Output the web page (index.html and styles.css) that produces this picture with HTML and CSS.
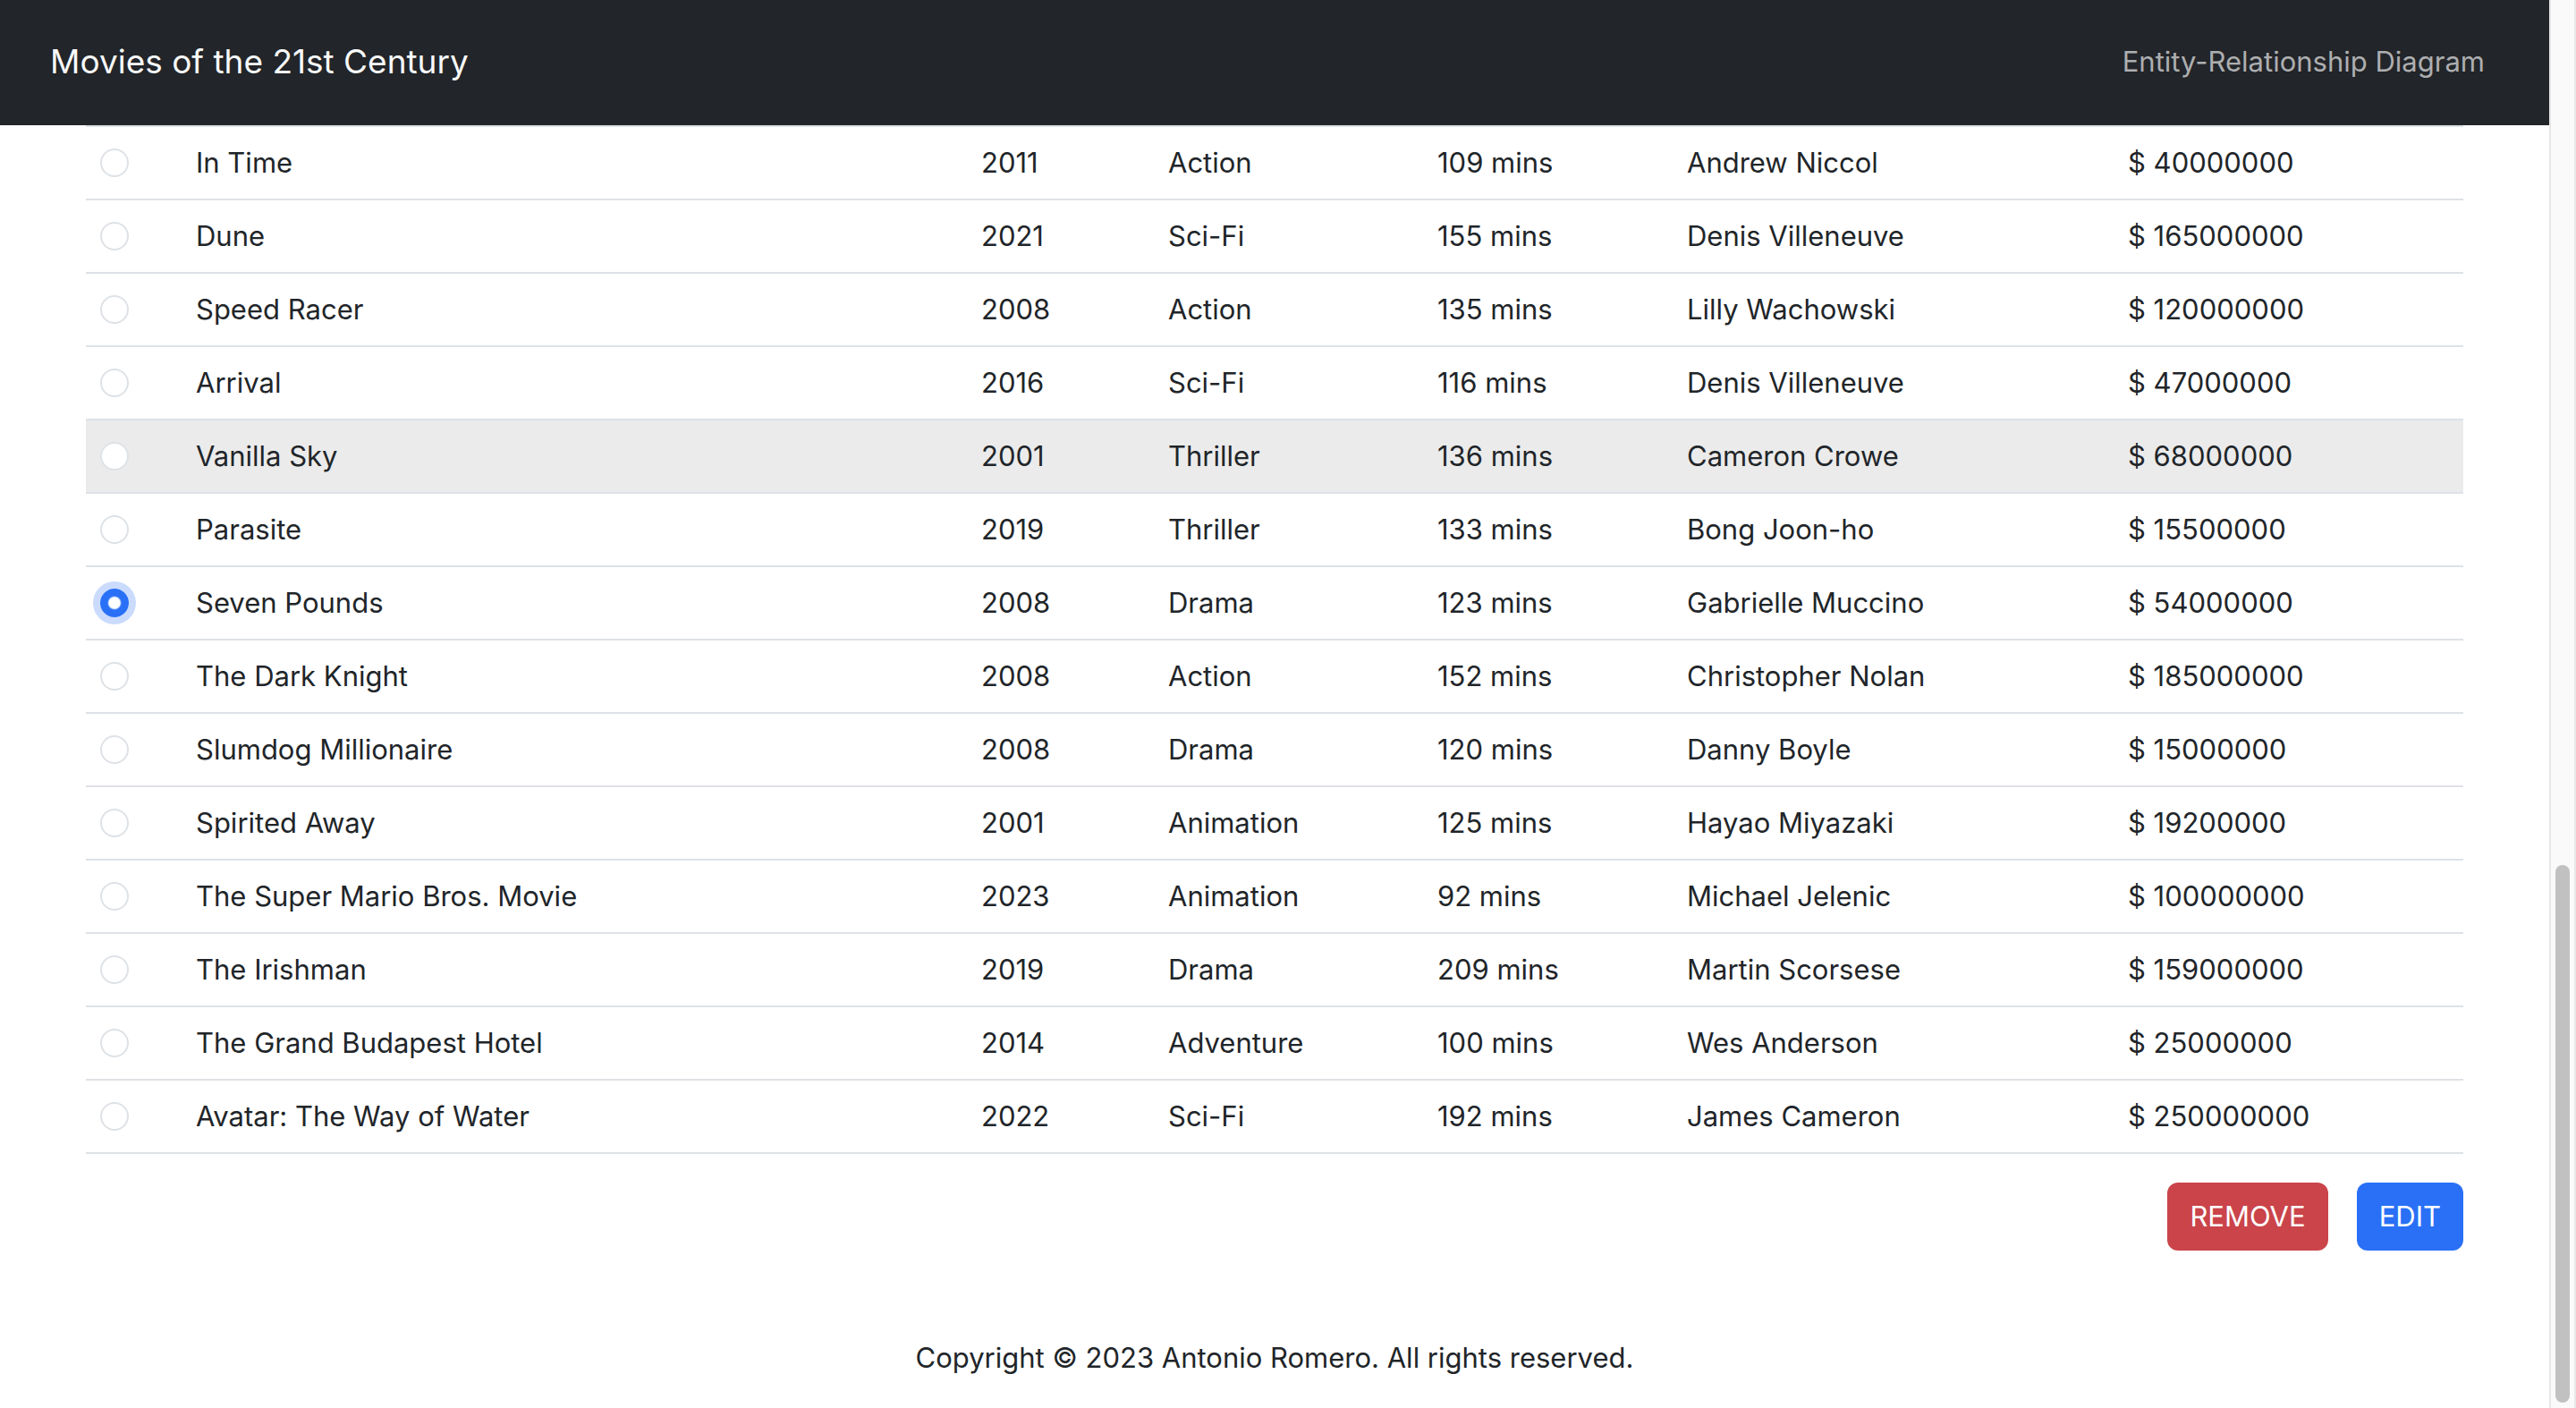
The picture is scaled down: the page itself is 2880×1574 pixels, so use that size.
FILE: index.html
```html
<!DOCTYPE html>
<html lang="en">
<head>
<meta charset="utf-8">
<meta name="viewport" content="width=device-width, initial-scale=1">
<title>Movies of the 21st Century</title>
<link rel="stylesheet" href="styles.css">
</head>
<body>
<div class="page">
  <header class="navbar">
    <a class="brand" href="#">Movies of the 21st Century</a>
    <nav><a class="nav-link" href="#">Entity-Relationship Diagram</a></nav>
  </header>
  <main class="content">
    <table class="movies">
      <colgroup>
        <col class="col-pick"><col class="col-title"><col class="col-year"><col class="col-genre"><col class="col-length"><col class="col-director"><col class="col-budget">
      </colgroup>
      <tbody>
        <tr><td><input class="radio" type="radio" name="movie" id="m1"></td><td><label for="m1">In Time</label></td><td>2011</td><td>Action</td><td>109 mins</td><td>Andrew Niccol</td><td>$ 40000000</td></tr>
        <tr><td><input class="radio" type="radio" name="movie" id="m2"></td><td><label for="m2">Dune</label></td><td>2021</td><td>Sci-Fi</td><td>155 mins</td><td>Denis Villeneuve</td><td>$ 165000000</td></tr>
        <tr><td><input class="radio" type="radio" name="movie" id="m3"></td><td><label for="m3">Speed Racer</label></td><td>2008</td><td>Action</td><td>135 mins</td><td>Lilly Wachowski</td><td>$ 120000000</td></tr>
        <tr><td><input class="radio" type="radio" name="movie" id="m4"></td><td><label for="m4">Arrival</label></td><td>2016</td><td>Sci-Fi</td><td>116 mins</td><td>Denis Villeneuve</td><td>$ 47000000</td></tr>
        <tr class="is-hovered"><td><input class="radio" type="radio" name="movie" id="m5"></td><td><label for="m5">Vanilla Sky</label></td><td>2001</td><td>Thriller</td><td>136 mins</td><td>Cameron Crowe</td><td>$ 68000000</td></tr>
        <tr><td><input class="radio" type="radio" name="movie" id="m6"></td><td><label for="m6">Parasite</label></td><td>2019</td><td>Thriller</td><td>133 mins</td><td>Bong Joon-ho</td><td>$ 15500000</td></tr>
        <tr><td><input class="radio" type="radio" name="movie" id="m7" checked></td><td><label for="m7">Seven Pounds</label></td><td>2008</td><td>Drama</td><td>123 mins</td><td>Gabrielle Muccino</td><td>$ 54000000</td></tr>
        <tr><td><input class="radio" type="radio" name="movie" id="m8"></td><td><label for="m8">The Dark Knight</label></td><td>2008</td><td>Action</td><td>152 mins</td><td>Christopher Nolan</td><td>$ 185000000</td></tr>
        <tr><td><input class="radio" type="radio" name="movie" id="m9"></td><td><label for="m9">Slumdog Millionaire</label></td><td>2008</td><td>Drama</td><td>120 mins</td><td>Danny Boyle</td><td>$ 15000000</td></tr>
        <tr><td><input class="radio" type="radio" name="movie" id="m10"></td><td><label for="m10">Spirited Away</label></td><td>2001</td><td>Animation</td><td>125 mins</td><td>Hayao Miyazaki</td><td>$ 19200000</td></tr>
        <tr><td><input class="radio" type="radio" name="movie" id="m11"></td><td><label for="m11">The Super Mario Bros. Movie</label></td><td>2023</td><td>Animation</td><td>92 mins</td><td>Michael Jelenic</td><td>$ 100000000</td></tr>
        <tr><td><input class="radio" type="radio" name="movie" id="m12"></td><td><label for="m12">The Irishman</label></td><td>2019</td><td>Drama</td><td>209 mins</td><td>Martin Scorsese</td><td>$ 159000000</td></tr>
        <tr><td><input class="radio" type="radio" name="movie" id="m13"></td><td><label for="m13">The Grand Budapest Hotel</label></td><td>2014</td><td>Adventure</td><td>100 mins</td><td>Wes Anderson</td><td>$ 25000000</td></tr>
        <tr><td><input class="radio" type="radio" name="movie" id="m14"></td><td><label for="m14">Avatar: The Way of Water</label></td><td>2022</td><td>Sci-Fi</td><td>192 mins</td><td>James Cameron</td><td>$ 250000000</td></tr>
      </tbody>
    </table>
    <div class="actions">
      <button class="btn btn-danger" type="button">REMOVE</button>
      <button class="btn btn-primary" type="button">EDIT</button>
    </div>
  </main>
  <footer class="footer">Copyright © 2023 Antonio Romero. All rights reserved.</footer>
</div>
<div class="scroll-track" aria-hidden="true"><div class="scroll-thumb"></div></div>
</body>
</html>
```
FILE: styles.css
```css
* {
  box-sizing: border-box;
}

body {
  margin: 0;
  display: flex;
  min-height: 100vh;
  background: #fff;
  color: #212529;
  font-family: Inter, "Liberation Sans", sans-serif;
  font-size: 31px;
  line-height: 48px;
}

.page {
  flex: 1;
  min-width: 0;
}

/* Top bar */
.navbar {
  display: flex;
  justify-content: space-between;
  align-items: center;
  min-height: 140px;
  padding: 0 72px 2px 56px;
  background: #222529;
}

.brand {
  color: #f8f9fa;
  font-size: 37px;
  text-decoration: none;
}

.nav-link {
  color: #adaeb0;
  text-decoration: none;
}

/* Movie list */
.content {
  padding: 0 96px;
}

.movies {
  width: 100%;
  table-layout: fixed;
  border-collapse: separate;
  border-spacing: 0;
}

.col-pick { width: 107px; }
.col-year { width: 209px; }
.col-genre { width: 301px; }
.col-length { width: 279px; }
.col-director { width: 493px; }
.col-budget { width: 391px; }

.movies td {
  padding: 16px;
  border-bottom: 2px solid #dee2e6;
}

.movies tr:first-child td {
  border-top: 2px solid #dee2e6;
}

.is-hovered td {
  background: #ebebeb;
}

.radio {
  appearance: none;
  display: block;
  width: 32px;
  height: 32px;
  margin: 0;
  border: 2px solid #dee2e6;
  border-radius: 50%;
  background: #fff;
}

.radio:checked {
  border-color: #2970f6;
  background: radial-gradient(circle, #fff 6px, #2970f6 8px);
  box-shadow: 0 0 0 8px #cadbfd;
}

/* Buttons under the list */
.actions {
  display: flex;
  justify-content: flex-end;
  gap: 32px;
  padding-top: 32px;
}

.btn {
  padding: 14px 25px;
  border: 0;
  border-radius: 12px;
  color: #fff;
  font: inherit;
}

.btn-danger { background: #ca444a; }
.btn-primary { background: #2970f6; }

.footer {
  padding: 96px 96px 0;
  text-align: center;
}

/* Scroll bar */
.scroll-track {
  display: flex;
  flex-direction: column;
  justify-content: flex-end;
  align-items: center;
  width: 30px;
  padding-bottom: 6px;
  border: solid #e8e8e8;
  border-width: 0 2px;
  background: #fafafa;
}

.scroll-thumb {
  width: 16px;
  height: 601px;
  border-radius: 8px;
  background: #c1c1c1;
}
```
